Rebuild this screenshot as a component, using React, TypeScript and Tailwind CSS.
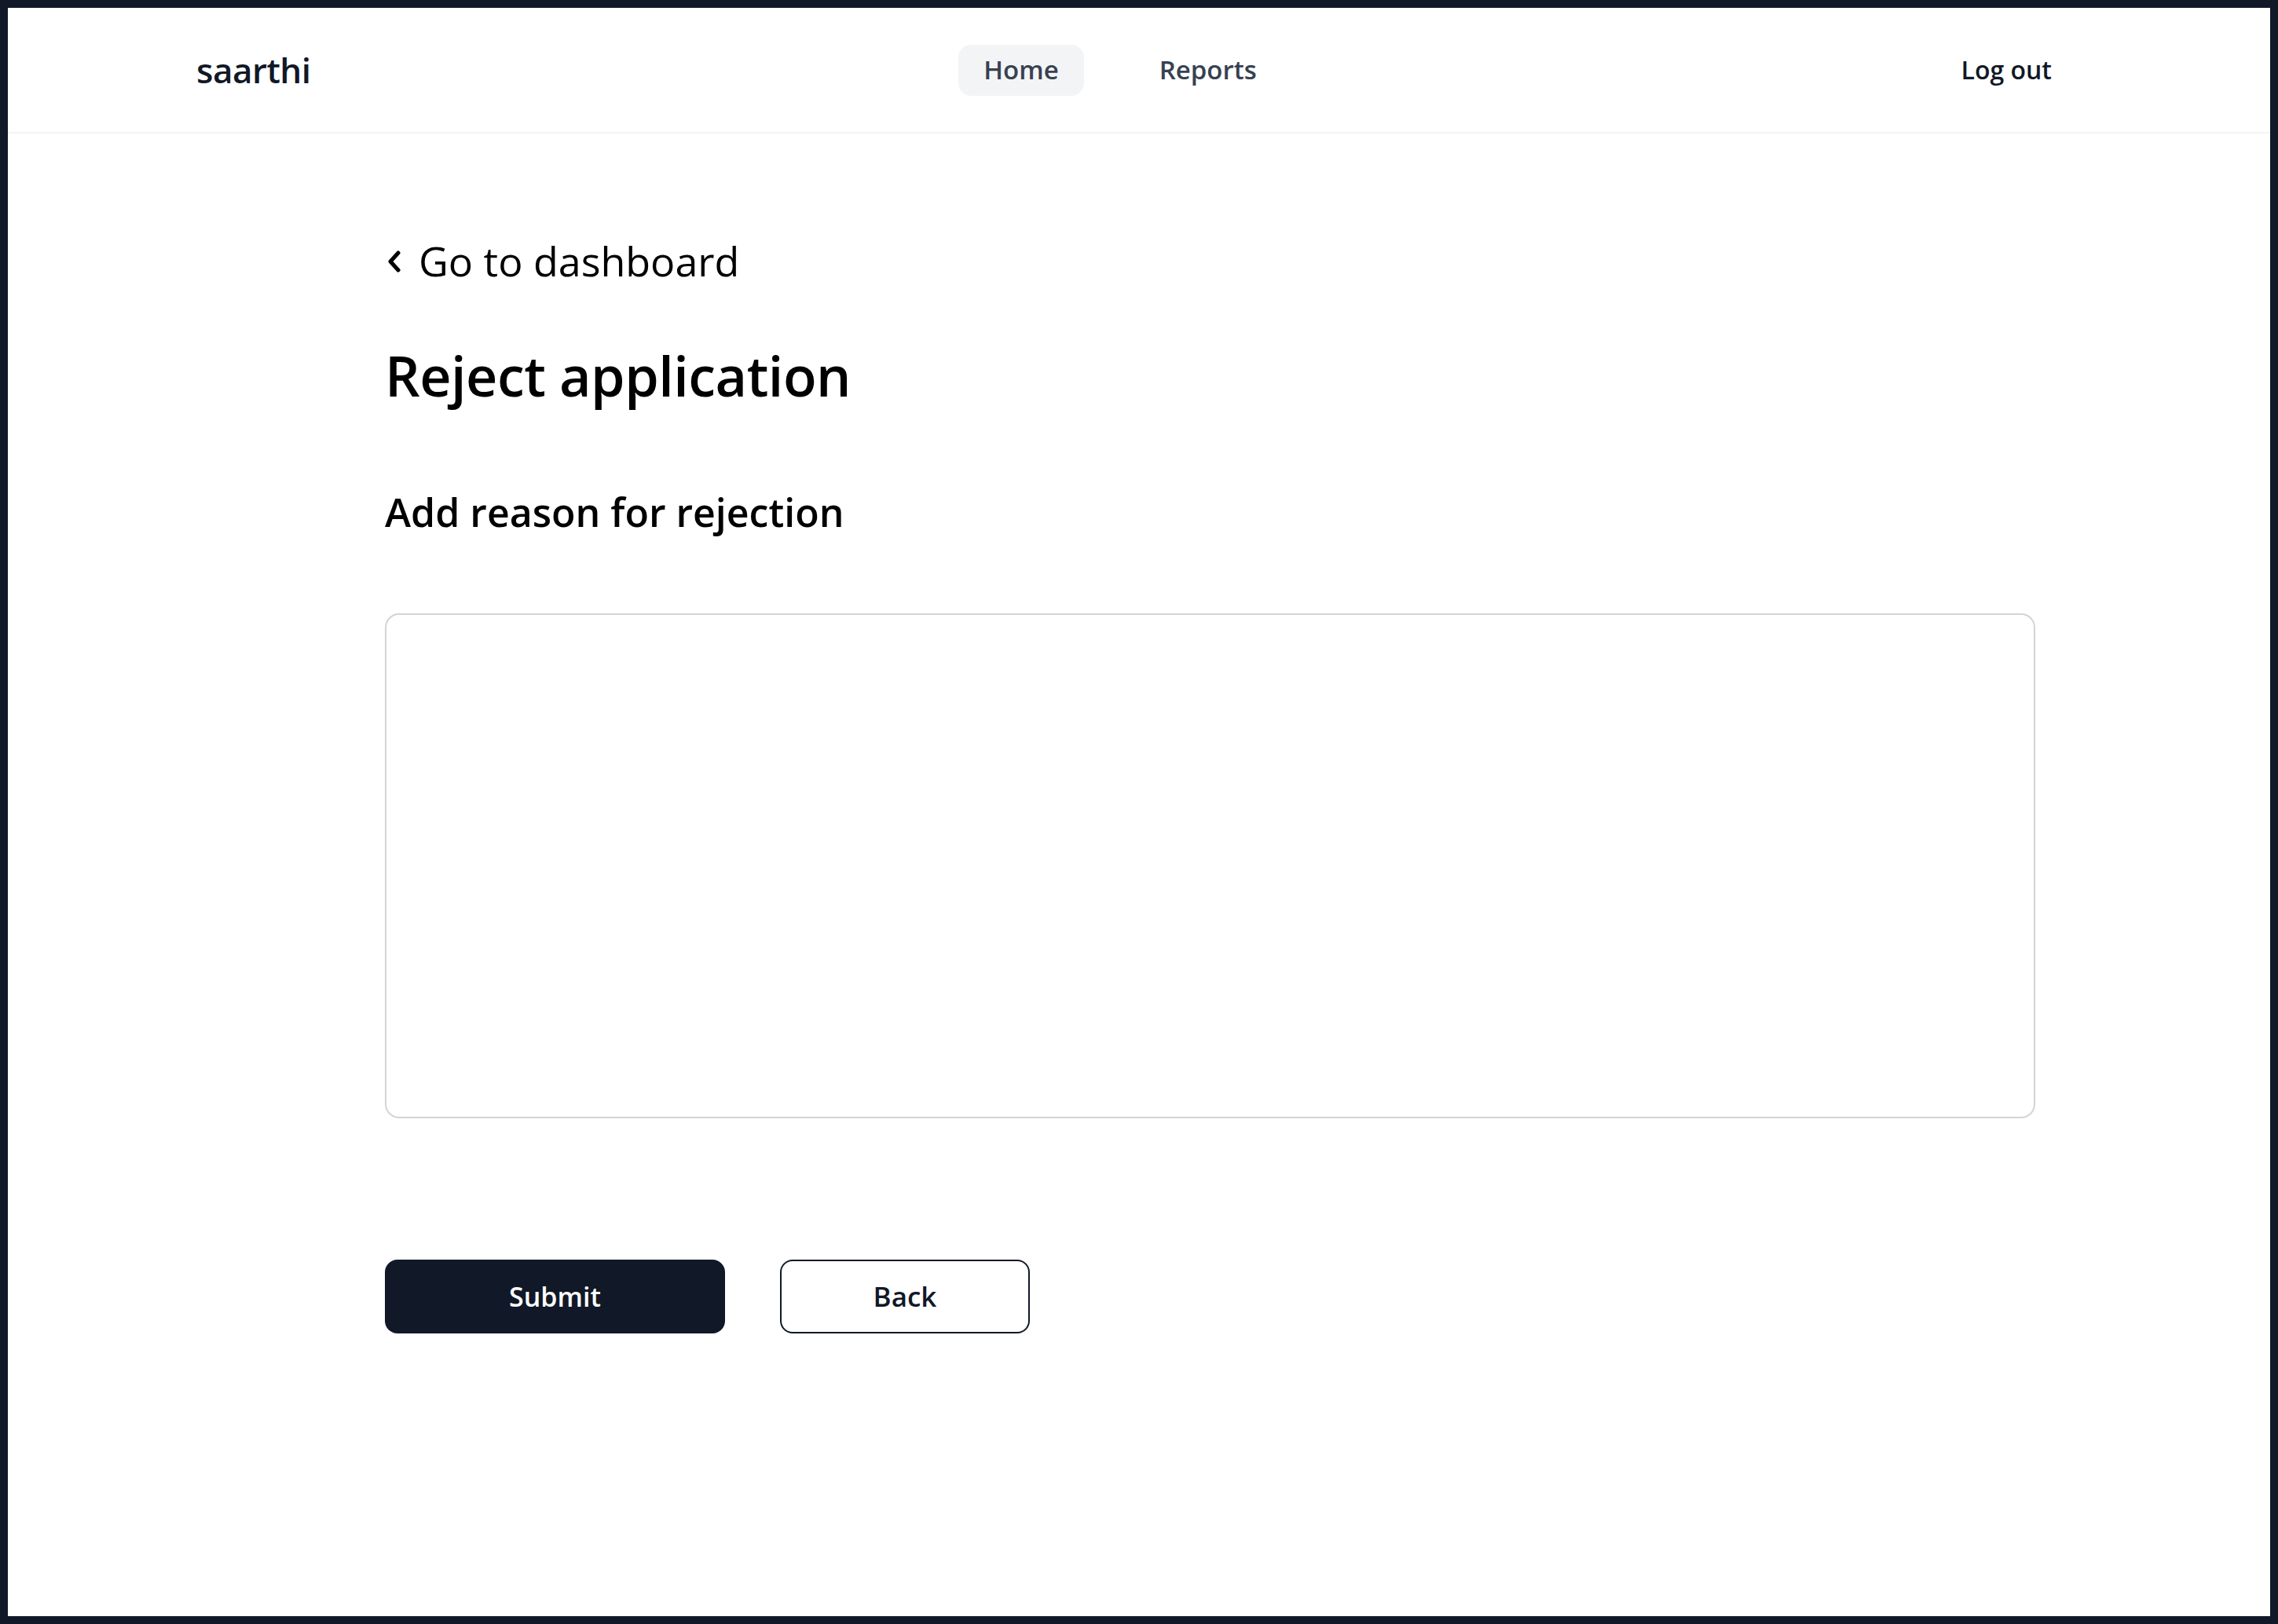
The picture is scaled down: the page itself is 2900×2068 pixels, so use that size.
import { useState } from "react";

const font = { fontFamily: '"Open Sans", "Noto Sans", sans-serif' };

function Header() {
  return (
    <header className="h-[160px] shrink-0 border-b-2 border-[#f3f4f6]">
      <div className="mx-auto flex h-full w-full max-w-[2400px] items-center justify-between">
        <span className="text-[44px] font-semibold tracking-[-0.5px] text-[#111827]">saarthi</span>
        <nav className="flex items-center gap-[64px]">
          <a className="flex h-[65px] items-center rounded-[16px] bg-[#f3f4f6] px-8 text-[33px] font-semibold text-[#374151]">
            Home
          </a>
          <a className="flex h-[65px] items-center px-8 text-[33px] font-semibold text-[#374151]">
            Reports
          </a>
        </nav>
        <button type="button" className="pl-[40px] pr-[38px] text-[32px] font-semibold text-[#111827]">
          Log out
        </button>
      </div>
    </header>
  );
}

export default function App() {
  const [reason, setReason] = useState("");

  return (
    <div className="h-screen bg-[#111827] p-[10px]" style={font}>
      <div className="flex h-full flex-col bg-white">
        <Header />

        <main className="mx-auto w-full max-w-[2400px] pl-[240px]">
          {/* back link */}
          <a className="mt-[130px] flex h-[64px] items-center gap-[19px] text-[52px] leading-[64px] text-black">
            <svg width="24" height="34" viewBox="0 0 24 34" fill="none" className="mt-[2px]">
              <polyline
                points="17,6 7,17 17,28"
                stroke="black"
                strokeWidth="5"
                strokeLinecap="round"
                strokeLinejoin="round"
              />
            </svg>
            Go to dashboard
          </a>

          <h1 className="mt-[66px] text-[70px] font-semibold leading-[96px] tracking-[-0.5px] text-black">
            Reject application
          </h1>

          <h2 className="mt-[94px] text-[50px] font-semibold leading-[64px] text-black">
            Add reason for rejection
          </h2>

          <textarea
            value={reason}
            onChange={(e) => setReason(e.target.value)}
            className="mt-[97px] block h-[643px] w-[2101px] resize-none rounded-[18px] border-2 border-[#d4d4d8] p-6 text-[32px] outline-none"
          />

          <div className="mt-[180px] flex items-center gap-[70px]">
            <button
              type="button"
              className="h-[94px] w-[433px] rounded-[16px] bg-[#111827] text-[34px] font-semibold text-white"
            >
              Submit
            </button>
            <button
              type="button"
              className="h-[94px] w-[318px] rounded-[16px] border-2 border-[#111827] bg-white text-[35px] font-semibold text-[#111827]"
            >
              Back
            </button>
          </div>
        </main>
      </div>
    </div>
  );
}
